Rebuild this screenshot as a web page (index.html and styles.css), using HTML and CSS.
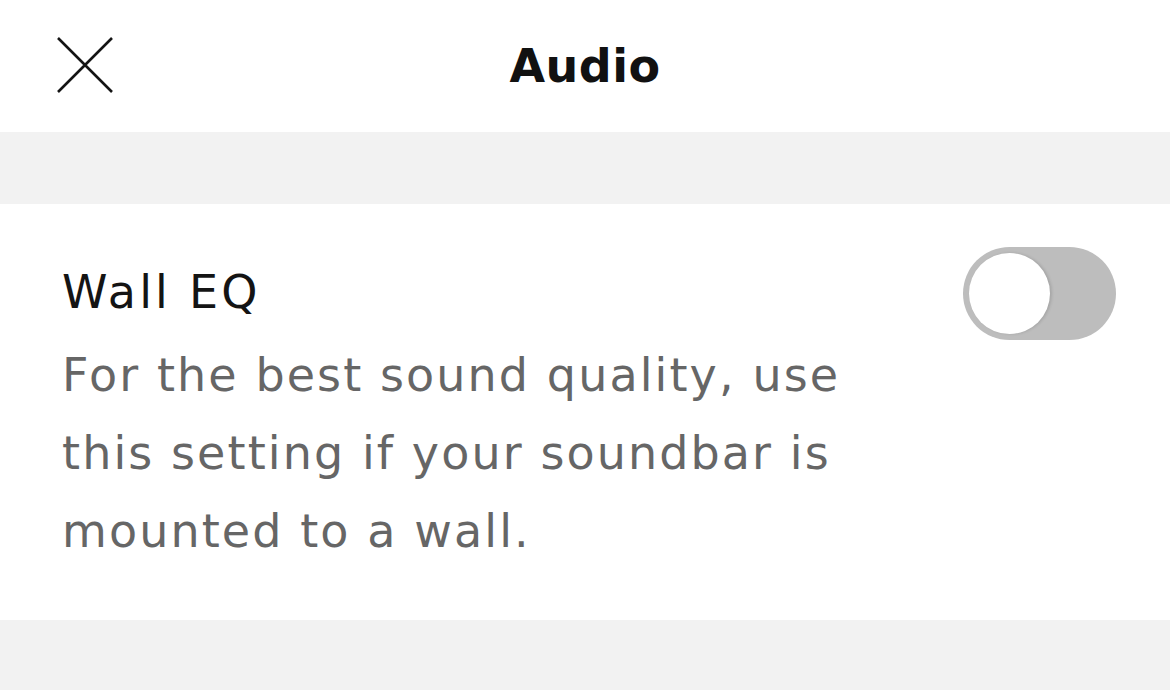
FILE: index.html
```html
<!DOCTYPE html>
<html>
<head>
<meta charset="utf-8">
<link rel="stylesheet" href="styles.css">
</head>
<body>
<header class="header">
  <button class="close" aria-label="Close">
    <svg width="56" height="56" viewBox="0 0 56 56"><path d="M1 1 L55 55 M55 1 L1 55" stroke="#141414" stroke-width="2.6" fill="none"/></svg>
  </button>
  <h1 class="title">Audio</h1>
  <span></span>
</header>
<div class="spacer"></div>
<section class="setting">
  <div class="setting-text">
    <div class="setting-name">Wall EQ</div>
    <p class="setting-desc">For the best sound quality, use this setting if your soundbar is mounted to a wall.</p>
  </div>
  <div class="toggle"><div class="knob"></div></div>
</section>
<div class="footer-band"></div>
</body>
</html>
```
FILE: styles.css
```css
html, body {
  margin: 0;
  padding: 0;
  background: #f2f2f2;
  font-family: "DejaVu Sans", "Open Sans", sans-serif;
}
.header {
  height: 132px;
  background: #ffffff;
  display: grid;
  grid-template-columns: 1fr auto 1fr;
  align-items: center;
}
.close {
  justify-self: start;
  margin-left: 57px;
  margin-top: -2px;
  padding: 0;
  border: 0;
  background: none;
  width: 56px;
  height: 56px;
  display: block;
}
.close svg { display: block; }
.title {
  margin: 0;
  font-size: 46px;
  font-weight: 700;
  color: #111111;
  line-height: 132px;
  letter-spacing: 0.5px;
}
.spacer {
  height: 72px;
  background: #f2f2f2;
}
.setting {
  background: #ffffff;
  display: flex;
  justify-content: space-between;
  align-items: flex-start;
  padding: 58px 54px 50px 62px;
}
.setting-text {
  width: 810px;
}
.setting-name {
  font-size: 46px;
  line-height: 60px;
  color: #141414;
  letter-spacing: 3.2px;
}
.setting-desc {
  margin: 14px 0 0;
  font-size: 46px;
  line-height: 78px;
  color: #666666;
  letter-spacing: 2.1px;
}
.toggle {
  margin-top: -15px;
  width: 153px;
  height: 93px;
  border-radius: 47px;
  background: #bdbdbd;
  position: relative;
  flex-shrink: 0;
}
.knob {
  position: absolute;
  left: 6px;
  top: 6px;
  width: 81px;
  height: 81px;
  border-radius: 50%;
  background: #ffffff;
  box-shadow: 2px 0 3px rgba(0,0,0,0.12);
}
.footer-band {
  height: 70px;
  background: #f2f2f2;
}
```
